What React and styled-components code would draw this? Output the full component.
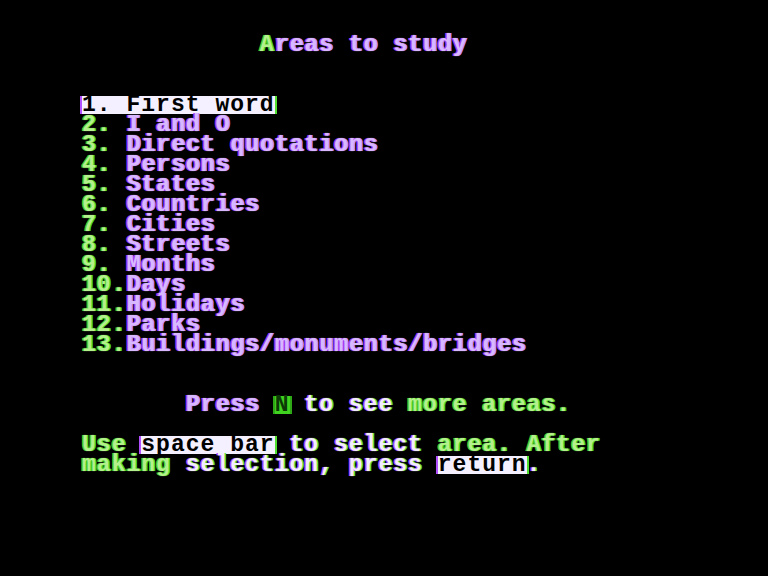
import React from 'react'
import styled, { createGlobalStyle } from 'styled-components'

const GlobalStyle = createGlobalStyle`
  html, body {
    margin: 0;
    padding: 0;
    background: #000;
  }
`

const tones = {
  white: { color: '#f2ecff', left: '#b24cff', right: '#56e03a' },
  violet: { color: '#d8b8ff', left: '#a23cf0', right: '#c890ff' },
  green: { color: '#b4f08c', left: '#4cc828', right: '#46d82a' },
}

const Screen = styled.div`
  width: 768px;
  height: 576px;
  box-sizing: border-box;
  padding: 35px 0 0 82px;
  background: #000;
  font-family: "Liberation Mono", "DejaVu Sans Mono", monospace;
  font-weight: bold;
  font-size: 23px;
  letter-spacing: 1.02px;
  display: flex;
  flex-direction: column;
`

const Row = styled.div`
  height: 20px;
  display: flex;
  align-items: center;
  white-space: pre;
  padding-left: ${(props) => (props.col || 0) * 14.82}px;
`

const Txt = styled.span`
  line-height: 20px;
  color: ${(props) => tones[props.tone || 'white'].color};
  text-shadow: -1.5px 0 ${(props) => tones[props.tone || 'white'].left},
    1.5px 0 ${(props) => tones[props.tone || 'white'].right},
    0 0 1px ${(props) => tones[props.tone || 'white'].color};
`

const Inverse = styled.span`
  height: 18px;
  line-height: 18px;
  display: inline-flex;
  align-items: center;
  background: ${(props) => (props.green ? '#3fd21f' : '#f4f0ff')};
  color: ${(props) => (props.green ? '#0c3a06' : '#000')};
  box-shadow: -2px 0 0 ${(props) => (props.green ? '#2fa818' : '#b050ff')},
    2px 0 0 ${(props) => (props.green ? '#2fa818' : '#52e030')};
`

const items = [
  'I and O',
  'Direct quotations',
  'Persons',
  'States',
  'Countries',
  'Cities',
  'Streets',
  'Months',
  'Days',
  'Holidays',
  'Parks',
  'Buildings/monuments/bridges',
]

function Item({ n, name }) {
  const num = n < 10 ? `${n}. ` : `${n}.`
  return (
    <Row>
      <Txt tone="green">{num}</Txt>
      <Txt tone="violet">{name}</Txt>
    </Row>
  )
}

export default function App() {
  return (
    <>
      <GlobalStyle />
      <Screen>
        <Row col={12}>
          <Txt tone="green">A</Txt>
          <Txt tone="violet">reas to study</Txt>
        </Row>
        <Row />
        <Row />
        <Row>
          <Inverse>1. First word</Inverse>
        </Row>
        {items.map((name, i) => (
          <Item key={name} n={i + 2} name={name} />
        ))}
        <Row />
        <Row />
        <Row col={7}>
          <Txt tone="violet">Press </Txt>
          <Inverse green>N</Inverse>
          <Txt tone="white"> to see </Txt>
          <Txt tone="green">more areas.</Txt>
        </Row>
        <Row />
        <Row>
          <Txt tone="green">Use </Txt>
          <Inverse>space bar</Inverse>
          <Txt tone="white"> to select </Txt>
          <Txt tone="green">area. After</Txt>
        </Row>
        <Row>
          <Txt tone="green">making </Txt>
          <Txt tone="white">selection, press </Txt>
          <Inverse>return</Inverse>
          <Txt tone="white">.</Txt>
        </Row>
      </Screen>
    </>
  )
}
